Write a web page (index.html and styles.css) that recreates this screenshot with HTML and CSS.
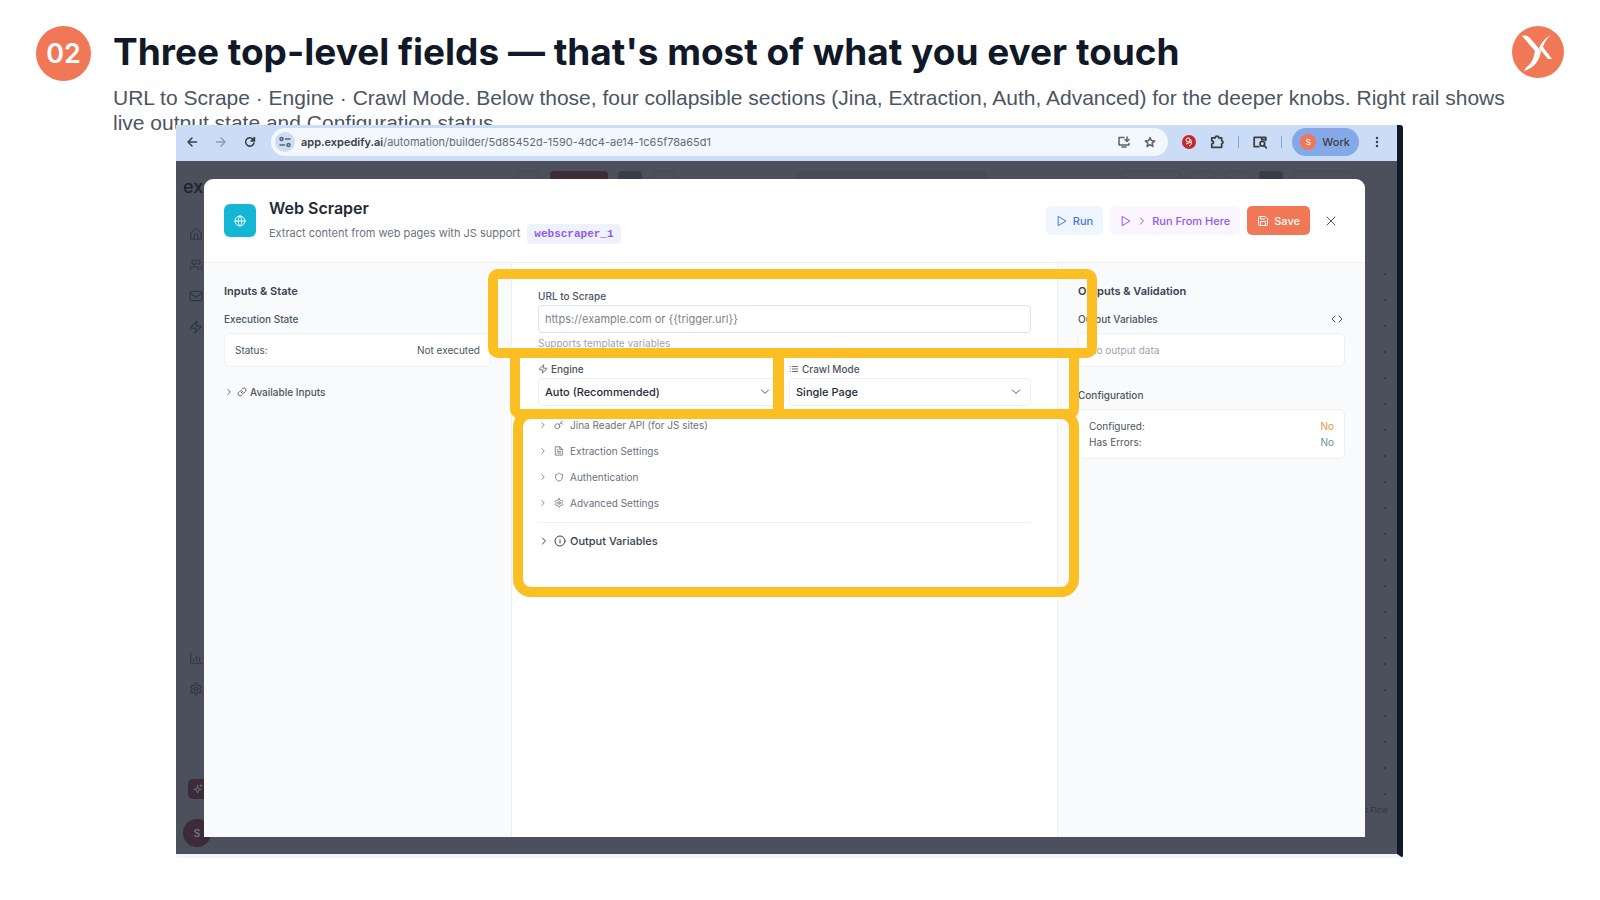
FILE: index.html
```html
<!DOCTYPE html>
<html lang="en">
<head>
    <meta charset="UTF-8">
    <meta name="viewport" content="width=device-width, initial-scale=1.0">
    <title>Three top-level fields</title>
    <link rel="stylesheet" href="styles.css">
</head>
<body>
    <!-- shared icons -->
    <svg class="sprite" aria-hidden="true">
        <symbol id="chevron-right" viewBox="0 0 24 24"><path d="m9 18 6-6-6-6"/></symbol>
        <symbol id="chevron-down" viewBox="0 0 24 24"><path d="m5 8 7 7 7-7"/></symbol>
        <symbol id="play" viewBox="0 0 24 24"><path d="M5 3l15 9-15 9z"/></symbol>
        <symbol id="zap" viewBox="0 0 24 24"><path d="M4 14a1 1 0 0 1-.8-1.6l9.900-10.200a.5.5 0 0 1 .9.500l-1.900 6a1 1 0 0 0 .9 1.300h7a1 1 0 0 1 .8 1.600l-9.900 10.200a.5.5 0 0 1-.9-.500l1.900-6a1 1 0 0 0-.9-1.300z"/></symbol>
        <symbol id="settings" viewBox="0 0 24 24"><path d="M12.200 2h-.4a2 2 0 0 0-2 2v.2a2 2 0 0 1-1 1.700l-.4.300a2 2 0 0 1-2 0l-.2-.1a2 2 0 0 0-2.700.7l-.2.400a2 2 0 0 0 .7 2.700l.2.100a2 2 0 0 1 1 1.700v.5a2 2 0 0 1-1 1.700l-.2.100a2 2 0 0 0-.7 2.700l.2.400a2 2 0 0 0 2.700.7l.2-.1a2 2 0 0 1 2 0l.4.300a2 2 0 0 1 1 1.700v.2a2 2 0 0 0 2 2h.4a2 2 0 0 0 2-2v-.2a2 2 0 0 1 1-1.700l.4-.3a2 2 0 0 1 2 0l.2.100a2 2 0 0 0 2.700-.7l.2-.4a2 2 0 0 0-.7-2.700l-.2-.1a2 2 0 0 1-1-1.700v-.5a2 2 0 0 1 1-1.700l.2-.1a2 2 0 0 0 .7-2.700l-.2-.4a2 2 0 0 0-2.700-.7l-.2.100a2 2 0 0 1-2 0l-.4-.3a2 2 0 0 1-1-1.700V4a2 2 0 0 0-2-2z"/><circle cx="12" cy="12" r="3"/></symbol>
    </svg>

    <header class="slide-header">
        <div class="step">02</div>
        <div class="heading">
            <h1>Three top-level fields — that's most of what you ever touch</h1>
            <p>URL to Scrape · Engine · Crawl Mode. Below those, four collapsible sections (Jina, Extraction, Auth, Advanced) for the deeper knobs. Right rail shows live output state and Configuration status.</p>
        </div>
        <svg class="brand" viewBox="0 0 52 52" role="img" aria-label="Expedify">
            <circle cx="26" cy="26" r="26" fill="#f07857"/>
            <path d="M10 10c4-1 6 0 8 2l11 13c-1 8-6 17-17 20 1-3 3-4 5-6 4-4 5-9 6-14z" fill="#fff"/>
            <path d="M39 9c-5 2-9 7-12 13l9 11h4l-9-12c1-4 4-9 8-12z" fill="#fff"/>
        </svg>
    </header>

    <main class="browser">
        <div class="toolbar">
            <button class="tool" aria-label="Back"><svg class="icon" viewBox="0 0 24 24"><path d="M21 12H4m8-8-8 8 8 8"/></svg></button>
            <button class="tool faded" aria-label="Forward"><svg class="icon" viewBox="0 0 24 24"><path d="M3 12h17m-8-8 8 8-8 8"/></svg></button>
            <button class="tool" aria-label="Reload"><svg class="icon" viewBox="0 0 24 24"><path d="M20 14a8.500 8.500 0 1 1-2-8l2 2"/><path d="M21 3v7h-7z" fill="currentColor"/></svg></button>
            <div class="omnibox">
                <span class="site-info"><svg class="icon" viewBox="0 0 24 24"><circle cx="5" cy="6" r="3"/><path d="M13 6h9M2 18h9"/><circle cx="19" cy="18" r="3"/></svg></span>
                <span class="url"><b>app.expedify.ai</b>/automation/builder/5d85452d-1590-4dc4-ae14-1c65f78a65d1</span>
                <svg class="icon" viewBox="0 0 24 24"><path d="M12 3H2v15h20v-3M8 22h8M18 2v9m-4-4 4 4 4-4"/></svg>
                <svg class="icon" viewBox="0 0 24 24"><path d="m12 3 2.700 6.200 6.800.6-5.200 4.500 1.600 6.700-5.900-3.600L6.100 21l1.600-6.700-5.200-4.500 6.800-.6z"/></svg>
            </div>
            <div class="extensions">
                <svg class="ext-red" viewBox="0 0 14 14"><circle cx="7" cy="7" r="7" fill="#c5282c"/><circle cx="6" cy="5" r="2" fill="none" stroke="#fff"/><path d="M8 4c2 2 2 6-1 7M4 9l5-2" fill="none" stroke="#fff"/></svg>
                <svg class="icon" viewBox="0 0 24 24"><path d="M3 5h6c0-4 6-4 6 0h5v5c3 0 3 5 0 5v6H3v-6c4 0 4-5 0-5z"/></svg>
                <i class="rule"></i>
                <svg class="icon" viewBox="0 0 24 24"><path d="M10 20H2V4h20v5M15 4v4h7"/><circle cx="16" cy="15" r="4"/><path d="m19 18 4 4"/></svg>
                <i class="rule"></i>
            </div>
            <button class="profile"><span>S</span>Work</button>
            <button class="tool kebab" aria-label="Menu"><svg class="icon" viewBox="0 0 24 24"><g fill="currentColor"><circle cx="12" cy="4" r="1"/><circle cx="12" cy="12" r="1"/><circle cx="12" cy="20" r="1"/></g></svg></button>
        </div>

        <div class="app">
            <div class="app-top">
                <i class="ghost outline"></i><i class="ghost wine"></i><i class="ghost green"></i><i class="ghost outline"></i>
                <i class="ghost tabs"></i>
                <i class="ghost outline wide"></i><i class="ghost outline"></i><i class="ghost outline"></i><i class="ghost green"></i><i class="ghost outline wide"></i>
            </div>
            <nav class="sidebar">
                <span class="logo">ex</span>
                <svg class="icon" viewBox="0 0 24 24"><path d="M3 10 12 2l9 8v11H3z"/><path d="M9 21v-9h6v9"/></svg>
                <svg class="icon" viewBox="0 0 24 24"><circle cx="9" cy="7" r="4"/><path d="M2 21v-2a4 4 0 0 1 4-4h6a4 4 0 0 1 4 4v2M22 21v-2a4 4 0 0 0-3-3.900M16 3.100a4 4 0 0 1 0 7.800"/></svg>
                <svg class="icon" viewBox="0 0 24 24"><rect x="2" y="4" width="20" height="16" rx="2"/><path d="m22 7-10 7L2 7"/></svg>
                <svg class="icon"><use href="#zap"/></svg>
                <svg class="icon lower" viewBox="0 0 24 24"><path d="M3 3v18h18M8 17v-3M13 17V9M18 17v-6"/></svg>
                <svg class="icon"><use href="#settings"/></svg>
                <span class="spark"><svg class="icon" viewBox="0 0 24 24"><path d="m11 4 2 7 7 2-7 2-2 7-2-7-7-2 7-2zM19 2v5M17 4h5"/></svg></span>
                <span class="user">S</span>
            </nav>
            <i class="canvas-dots"></i>
            <span class="flow">t Flow</span>

            <section class="modal">
                <header class="modal-header">
                    <span class="tile"><svg class="icon" viewBox="0 0 24 24"><circle cx="12" cy="12" r="10"/><path d="M12 2a15 15 0 0 0 0 20 15 15 0 0 0 0-20M2 12h20"/></svg></span>
                    <div class="modal-title">
                        <h2>Web Scraper</h2>
                        <p>Extract content from web pages with JS support <code>webscraper_1</code></p>
                    </div>
                    <div class="actions">
                        <button class="btn run"><svg class="icon"><use href="#play"/></svg>Run</button>
                        <button class="btn from-here"><svg class="icon"><use href="#play"/></svg><svg class="icon"><use href="#chevron-right"/></svg>Run From Here</button>
                        <button class="btn save"><svg class="icon" viewBox="0 0 24 24"><path d="M3 5a2 2 0 0 1 2-2h11l5 5v11a2 2 0 0 1-2 2H5a2 2 0 0 1-2-2z"/><path d="M17 21v-8H7v8M7 3v5h8"/></svg>Save</button>
                        <button class="close" aria-label="Close"><svg class="icon" viewBox="0 0 24 24"><path d="M4 4l16 16M20 4 4 20"/></svg></button>
                    </div>
                </header>

                <div class="columns">
                    <aside class="side">
                        <h3>Inputs &amp; State</h3>
                        <h4>Execution State</h4>
                        <div class="card"><div class="pair"><span>Status:</span><span>Not executed</span></div></div>
                        <button class="available"><svg class="icon"><use href="#chevron-right"/></svg><svg class="icon" viewBox="0 0 24 24"><path d="M10 13a5 5 0 0 0 7.500.5l3-3a5 5 0 0 0-7-7L12 5"/><path d="M14 11a5 5 0 0 0-7.500-.5l-3 3a5 5 0 0 0 7 7L12 19"/></svg>Available Inputs</button>
                    </aside>

                    <form class="center">
                        <label for="url">URL to Scrape</label>
                        <input id="url" type="text" placeholder="https://example.com or {{trigger.url}}">
                        <p class="hint">Supports template variables</p>
                        <div class="fields">
                            <div class="field">
                                <label for="engine"><svg class="icon"><use href="#zap"/></svg>Engine</label>
                                <div class="select"><select id="engine"><option>Auto (Recommended)</option></select><svg class="icon"><use href="#chevron-down"/></svg></div>
                            </div>
                            <div class="field">
                                <label for="mode"><svg class="icon" viewBox="0 0 24 24"><path d="M8 6h13M8 12h13M8 18h13M3 6h.1M3 12h.1M3 18h.1"/></svg>Crawl Mode</label>
                                <div class="select"><select id="mode"><option>Single Page</option></select><svg class="icon"><use href="#chevron-down"/></svg></div>
                            </div>
                        </div>
                        <div class="sections">
                            <button type="button"><svg class="icon"><use href="#chevron-right"/></svg><svg class="icon" viewBox="0 0 24 24"><circle cx="8" cy="15" r="6"/><path d="m12 11 9-9M16 7l4 3"/></svg>Jina Reader API (for JS sites)</button>
                            <button type="button"><svg class="icon"><use href="#chevron-right"/></svg><svg class="icon" viewBox="0 0 24 24"><path d="M4 2h10l6 6v14H4zM14 2v6h6M8 13h8M8 17h8M8 9h2"/></svg>Extraction Settings</button>
                            <button type="button"><svg class="icon"><use href="#chevron-right"/></svg><svg class="icon" viewBox="0 0 24 24"><path d="M20 13c0 5-3.500 7.500-8 9-4.500-1.500-8-4-8-9V6c3 0 6-1.500 8-4 2 2.500 5 4 8 4z"/></svg>Authentication</button>
                            <button type="button"><svg class="icon"><use href="#chevron-right"/></svg><svg class="icon"><use href="#settings"/></svg>Advanced Settings</button>
                        </div>
                        <button type="button" class="outputs"><svg class="icon"><use href="#chevron-right"/></svg><svg class="icon" viewBox="0 0 24 24"><circle cx="12" cy="12" r="10"/><path d="M12 16v-5M12 8h.1"/></svg>Output Variables</button>

                        <i class="mark mark-engine"></i>
                        <i class="mark mark-mode"></i>
                        <i class="mark mark-sections"></i>
                        <i class="mark mark-url"></i>
                    </form>

                    <aside class="side">
                        <h3>Outputs &amp; Validation</h3>
                        <h4>Output Variables <svg class="icon" viewBox="0 0 24 24"><path d="m8 6-6 6 6 6M16 6l6 6-6 6"/></svg></h4>
                        <div class="card empty">No output data</div>
                        <h4 class="config">Configuration</h4>
                        <div class="card">
                            <div class="pair"><span>Configured:</span><span class="warn">No</span></div>
                            <div class="pair"><span>Has Errors:</span><span class="ok">No</span></div>
                        </div>
                    </aside>
                </div>
            </section>
        </div>
    </main>
</body>
</html>
```
FILE: styles.css
```css
* {
    margin: 0;
    padding: 0;
    box-sizing: border-box;
}

body {
    min-height: 100vh;
    display: flex;
    flex-direction: column;
    padding: 26px 36px 42px;
    background: #fff;
    font-family: Inter, "Liberation Sans", sans-serif;
    color: #4b5563;
}

button,
input,
select {
    font: inherit;
    color: inherit;
    border: none;
    background: none;
}

button {
    cursor: pointer;
}

.sprite {
    position: absolute;
    width: 0;
    height: 0;
}

.icon {
    width: 12px;
    height: 12px;
    flex: none;
    fill: none;
    stroke: currentColor;
    stroke-width: 2;
    stroke-linecap: round;
    stroke-linejoin: round;
}

/* slide heading */
.slide-header {
    display: flex;
    align-items: flex-start;
}

.step {
    flex: none;
    width: 55px;
    height: 55px;
    margin-right: 22px;
    border-radius: 50%;
    background: #f07857;
    color: #fff;
    font-size: 27px;
    font-weight: 600;
    line-height: 56px;
    text-align: center;
}

.heading {
    flex: 1;
}

.heading h1 {
    font-size: 37px;
    line-height: 52px;
    font-weight: 700;
    color: #111827;
}

.heading p {
    margin-top: 7px;
    font-family: "Liberation Sans", sans-serif;
    font-size: 21px;
    line-height: 25px;
}

.brand {
    width: 52px;
    height: 52px;
    flex: none;
}

/* browser window */
.browser {
    flex: 1;
    display: flex;
    flex-direction: column;
    position: relative;
    margin: -10px 161px 0 140px;
    border-right: 6px solid #111827;
    border-bottom: 4px solid #f3f5fb;
    border-radius: 3px;
}

.toolbar {
    display: flex;
    align-items: center;
    height: 36px;
    padding: 0 0 2px 10px;
    background: #cbdcf6;
    color: #3c4043;
}

.tool {
    display: flex;
    justify-content: center;
    width: 12px;
    margin-right: 17px;
}

.tool .icon {
    stroke-width: 3;
}

.faded {
    color: #8d9bb3;
}

.omnibox {
    flex: 1;
    display: flex;
    align-items: center;
    gap: 14px;
    height: 28px;
    margin-left: -2px;
    padding: 0 12px 0 4px;
    border-radius: 14px;
    background: #f3f7fe;
    color: #5f6368;
}

.omnibox .icon {
    stroke-width: 3;
}

.site-info {
    display: flex;
    align-items: center;
    justify-content: center;
    width: 20px;
    height: 20px;
    margin-right: -8px;
    border-radius: 50%;
    background: #cbdcf6;
}

.url {
    flex: 1;
    font-size: 11px;
    color: #646b78;
}

.url b {
    font-weight: 600;
    color: #3c4043;
}

.extensions {
    display: flex;
    align-items: center;
    gap: 14px;
    margin: 0 10px 0 14px;
}

.extensions .icon,
.ext-red {
    width: 14px;
    height: 14px;
}

.extensions .icon {
    stroke-width: 3;
}

.rule {
    width: 1px;
    height: 12px;
    background: #7fa6ea;
}

.profile {
    display: flex;
    align-items: center;
    gap: 6px;
    height: 28px;
    padding: 0 9px 0 8px;
    border-radius: 14px;
    background: #85a9e8;
    font-size: 11px;
    font-weight: 500;
}

.profile span {
    width: 16px;
    height: 16px;
    border-radius: 50%;
    background: #f07857;
    color: #fff;
    font-size: 8px;
    line-height: 16px;
}

.kebab {
    margin: 0 14px 0 12px;
}

/* dimmed app behind the dialog */
.app {
    flex: 1;
    display: flex;
    position: relative;
    padding: 18px 32px 17px 28px;
    overflow: hidden;
    background: #4b505c;
    color: #303744;
}

.app-top {
    position: absolute;
    top: 10px;
    left: 340px;
    right: 44px;
    display: flex;
    gap: 10px;
}

.ghost {
    width: 24px;
    height: 22px;
    border-radius: 4px;
}

.outline {
    border: 1px solid #434955;
}

.wine {
    width: 58px;
    background: #3c2b38;
}

.green {
    background: #363f47;
}

.tabs {
    flex: 1;
    margin: 0 124px 0 110px;
    background: #464b57;
}

.wide {
    width: 60px;
}

.sidebar {
    position: absolute;
    top: 0;
    bottom: 0;
    left: 0;
    display: flex;
    flex-direction: column;
    gap: 17px;
    padding: 16px 0 7px 7px;
}

.sidebar .icon {
    width: 14px;
    height: 14px;
    margin-left: 6px;
}

.logo {
    margin-bottom: 13px;
    font-size: 18px;
    line-height: 20px;
    font-weight: 500;
    color: #1d2430;
}

.sidebar .lower {
    margin-top: auto;
}

.spark {
    width: 22px;
    height: 20px;
    margin: 66px 0 3px 5px;
    border-radius: 5px;
    background: #3c2b38;
    color: #747985;
}

.sidebar .spark .icon {
    width: 10px;
    height: 10px;
    display: block;
    margin: 5px;
}

.user {
    width: 28px;
    height: 28px;
    border-radius: 50%;
    background: #3c2b38;
    color: #747985;
    font-size: 10px;
    line-height: 28px;
    text-align: center;
    font-weight: 600;
}

.canvas-dots {
    position: absolute;
    top: 100px;
    right: 11px;
    bottom: 50px;
    width: 2px;
    background: radial-gradient(circle, #343b48 1px, transparent 1px) 0 0 / 2px 26px;
}

.flow {
    position: absolute;
    right: 9px;
    bottom: 39px;
    font-size: 8px;
}

/* dialog */
.modal {
    flex: 1;
    display: flex;
    flex-direction: column;
    position: relative;
    border-radius: 9px 9px 0 0;
    background: #fff;
    color: #4b5563;
}

.modal-header {
    display: flex;
    align-items: center;
    height: 84px;
    padding: 0 28px 0 20px;
    border-bottom: 1px solid #eef0f4;
}

.tile {
    display: flex;
    align-items: center;
    justify-content: center;
    width: 32px;
    height: 33px;
    margin-right: 13px;
    border-radius: 6px;
    background: #14b6d6;
    color: #fff;
}

.modal-title {
    flex: 1;
}

.modal-title h2 {
    font-size: 16px;
    line-height: 22px;
    font-weight: 600;
    color: #1f2937;
}

.modal-title p {
    margin-top: 4px;
    font-size: 11px;
    line-height: 20px;
    color: #6b7280;
}

.modal-title code {
    display: inline-block;
    margin-left: 4px;
    padding: 0 7px;
    border-radius: 4px;
    background: #edf2fd;
    color: #9457ee;
    font-family: "Liberation Mono", monospace;
    font-size: 11px;
    font-weight: 700;
}

.actions {
    display: flex;
    align-items: center;
    gap: 7px;
}

.btn {
    display: flex;
    align-items: center;
    gap: 5px;
    height: 29px;
    padding: 0 10px;
    border-radius: 5px;
    font-size: 11px;
    font-weight: 500;
}

.run {
    background: #eff6ff;
    color: #3f76e0;
}

.from-here {
    gap: 4px;
    background: #faf5ff;
    color: #9457ee;
}

.save {
    background: #f07857;
    color: #fff;
}

.close {
    display: flex;
    margin-left: 8px;
}

.columns {
    flex: 1;
    display: grid;
    grid-template-columns: 307fr 547fr 307fr;
}

.side {
    padding: 19px 20px;
    background: #f9fafc;
}

.side h3 {
    font-size: 11px;
    line-height: 18px;
    font-weight: 600;
    color: #374151;
}

.side h4 {
    display: flex;
    justify-content: space-between;
    align-items: center;
    margin: 11px 0 6px;
    padding-right: 2px;
    font-size: 10px;
    line-height: 16px;
    font-weight: 500;
}

.side h4.config {
    margin-top: 20px;
}

.card {
    padding: 8px 10px;
    border: 1px solid #eef0f4;
    border-radius: 6px;
    background: #fff;
    font-size: 10px;
    line-height: 16px;
}

.empty {
    color: #9ca3af;
}

.pair {
    display: flex;
    justify-content: space-between;
}

.warn {
    color: #f98c3a;
}

.ok {
    color: #6b8f9c;
}

.available {
    display: flex;
    align-items: center;
    gap: 3px;
    margin-top: 17px;
    font-size: 10px;
    line-height: 16px;
    font-weight: 500;
}

.available .icon {
    width: 10px;
    height: 10px;
}

/* settings form */
.center {
    position: relative;
    padding: 25px 26px;
    border: solid #eef0f4;
    border-width: 0 1px;
}

.center label {
    display: flex;
    align-items: center;
    gap: 3px;
    font-size: 10px;
    line-height: 16px;
    font-weight: 500;
}

.center label .icon {
    width: 10px;
    height: 10px;
}

.center input,
.center select {
    display: block;
    width: 100%;
    height: 28px;
    padding: 0 6px;
    border: 1px solid #dfe2ea;
    border-radius: 4px;
    background: #fff;
    font-size: 11px;
}

.center input {
    margin-top: 1px;
}

.center input::placeholder {
    color: #7b8290;
}

.center select {
    border-color: #eceef2;
    appearance: none;
    color: #1f2937;
    font-weight: 500;
}

.hint {
    margin-top: 2px;
    font-size: 10px;
    line-height: 16px;
    color: #9ca3af;
}

.fields {
    display: grid;
    grid-template-columns: 1fr 1fr;
    gap: 9px;
    margin-top: 10px;
}

.center .field label {
    margin-bottom: 1px;
}

.select {
    position: relative;
}

.select .icon {
    position: absolute;
    top: 8px;
    right: 9px;
}

.sections {
    display: flex;
    flex-direction: column;
    padding: 6px 0;
    border-bottom: 1px solid #eef0f4;
}

.sections button,
.outputs {
    display: flex;
    align-items: center;
    gap: 6px;
    height: 26px;
    font-size: 10px;
    color: #6b7280;
}

.sections .icon {
    width: 10px;
    height: 10px;
}

.center .outputs {
    gap: 4px;
    margin-top: 5px;
    font-size: 11px;
    font-weight: 500;
    color: #374151;
}

/* callout frames */
.mark {
    position: absolute;
    border: 10px solid #fbbf24;
    border-radius: 10px;
    pointer-events: none;
}

.mark-url {
    top: 6px;
    left: -24px;
    right: -40px;
    height: 89px;
}

.mark-engine,
.mark-mode {
    top: 85px;
    height: 71px;
}

.mark-engine {
    left: -2px;
    right: calc(50% + 1px);
    border-bottom-right-radius: 0;
}

.mark-mode {
    left: calc(50% - 12px);
    right: -22px;
    border-bottom-left-radius: 0;
}

.mark-sections {
    top: 146px;
    left: 1px;
    right: -22px;
    height: 188px;
    border-radius: 18px;
}
```
